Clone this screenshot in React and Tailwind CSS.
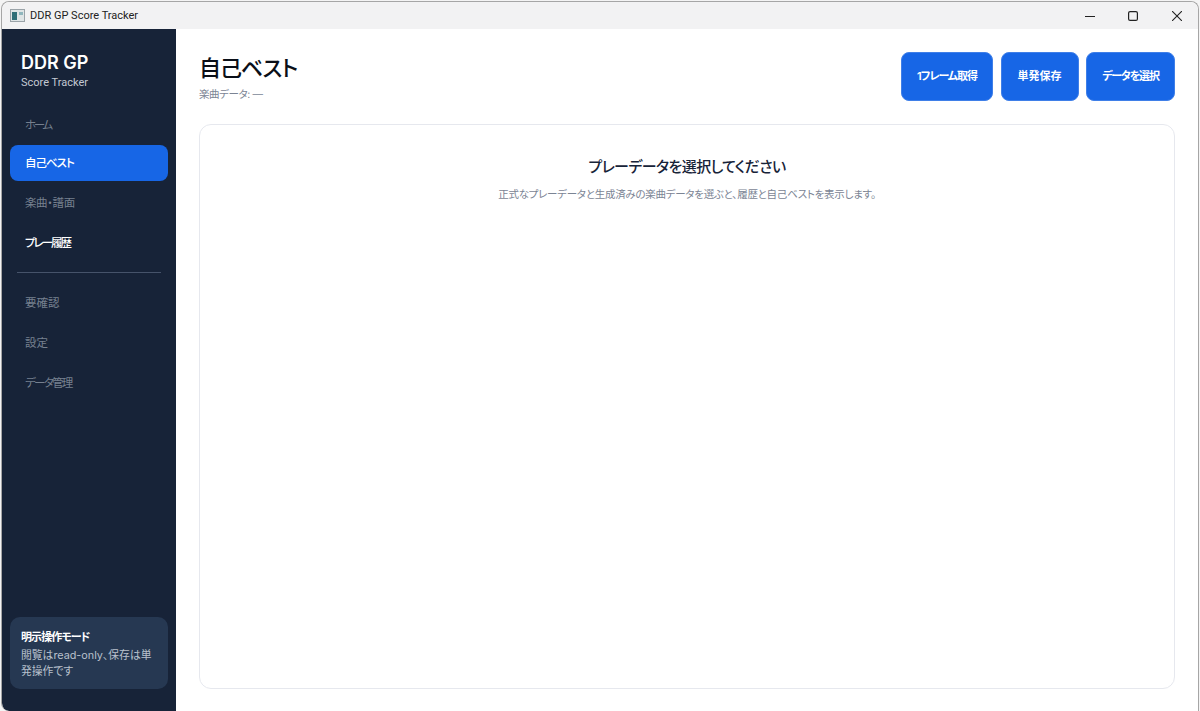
const font = "font-['Inter','Noto_Sans_CJK_JP',sans-serif] [font-feature-settings:'palt']";

const navTop = [
  { label: "ホーム", cls: "text-[#76808f] tracking-[-2.4px] pt-[5px]" },
  { label: "自己ベスト", cls: "bg-[#1766e6] text-white font-medium tracking-[-1.1px] pt-[1px]" },
  { label: "楽曲・譜面", cls: "text-[#76808f] tracking-[-0.4px] pt-[1px]" },
  { label: "プレー履歴", cls: "text-white font-medium tracking-[-2px] pt-[1px]" },
];
const navBottom = [
  { label: "要確認", cls: "" },
  { label: "設定", cls: "" },
  { label: "データ管理", cls: "tracking-[-1.7px]" },
];

const TitleBar = () => (
  <div className="h-[27px] shrink-0 flex items-center bg-[#f2f2f3] rounded-t-[7px]">
    <svg width="15" height="13" viewBox="0 0 15 13" className="ml-[8px] mr-[5px]">
      <rect x="0.5" y="0.5" width="14" height="12" fill="#dfe5e6" stroke="#9aa3a8" />
      <rect x="2" y="3" width="5" height="8" fill="#2f6f78" />
      <rect x="9" y="3" width="4" height="3" fill="#8fb6bd" />
    </svg>
    <span className="pt-[1px] text-[11px] text-[#222] font-['Roboto',sans-serif]">DDR GP Score Tracker</span>
    <div className="ml-auto mr-[16px] flex items-center">
      <svg width="10" height="10" viewBox="0 0 10 10">
        <path d="M0 5.5h10" stroke="#222" strokeWidth="1.2" />
      </svg>
      <svg width="10" height="10" viewBox="0 0 10 10" className="ml-[33px]">
        <rect x="0.6" y="0.6" width="8.8" height="8.8" rx="1.5" fill="none" stroke="#222" strokeWidth="1.2" />
      </svg>
      <svg width="10" height="10" viewBox="0 0 10 10" className="ml-[34px]">
        <path d="M0 0l10 10M10 0l-10 10" stroke="#222" strokeWidth="1.1" />
      </svg>
    </div>
  </div>
);

const Sidebar = () => (
  <aside className="w-[174px] shrink-0 bg-[#172338] flex flex-col px-[8px] pb-[22px] rounded-bl-[7px]">
    <div className="pl-[11px] pt-[22px]">
      <div className="text-[18px] leading-[24px] font-semibold text-white">DDR GP</div>
      <div className="text-[11px] leading-[16px] text-[#c3c9d3] font-['Roboto',sans-serif]">Score Tracker</div>
    </div>
    <nav className="mt-[14px] flex flex-col gap-[4px]">
      {navTop.map((item) => (
        <div key={item.label} className={`h-[36px] flex items-center pl-[15px] rounded-[8px] text-[11.5px] ${item.cls}`}>
          {item.label}
        </div>
      ))}
    </nav>
    <div className="mx-[7px] mt-[11px] mb-[12px] h-px bg-[#46536a]" />
    <nav className="flex flex-col gap-[4px]">
      {navBottom.map((item) => (
        <div key={item.label} className={`h-[36px] flex items-center pl-[15px] pt-[1px] rounded-[8px] text-[11.5px] text-[#76808f] ${item.cls}`}>
          {item.label}
        </div>
      ))}
    </nav>
    <div className="mt-auto h-[72px] rounded-[10px] bg-[#263852] pl-[11px] pr-[12px] pt-[12px]">
      <div className="text-[11px] leading-[16px] font-semibold text-white tracking-[-0.9px]">明示操作モード</div>
      <div className="mt-[3px] text-[10.8px] leading-[16px] text-[#b9c1cd]">閲覧はread-only、保存は単発操作です</div>
    </div>
  </aside>
);

const ActionButton = ({ width, children }) => (
  <button type="button" className={`${width} h-[49px] rounded-[8px] bg-[#1766e6] border border-[#3f7fe8] text-white text-[11px] font-semibold`}>
    {children}
  </button>
);

export default function App() {
  return (
    <div className={`w-[1200px] h-[711px] overflow-hidden bg-[#f4f4f4] flex ${font}`}>
      <div className="flex-1 mx-[1px] mt-[1px] flex flex-col bg-white border-x border-t border-[#a6a6a6] rounded-t-[8px] rounded-bl-[8px] overflow-hidden">
        <TitleBar />
        <div className="flex-1 flex min-h-0">
          <Sidebar />
          <main className="flex-1 flex flex-col pl-[23px] pr-[23px] pt-[23px] pb-[22px] min-w-0">
            <header className="h-[49px] flex justify-between items-start">
              <div>
                <h1 className="text-[22px] leading-[32px] font-medium text-[#0a0f18] tracking-[-1.1px]">自己ベスト</h1>
                <p className="mt-[4px] text-[10.5px] leading-[14px] text-[#7b8494] tracking-[-0.4px]">楽曲データ: —</p>
              </div>
              <div className="flex gap-[7.5px]">
                <ActionButton width="w-[92px] tracking-[-1px]">1フレーム取得</ActionButton>
                <ActionButton width="w-[78px]">単発保存</ActionButton>
                <ActionButton width="w-[89px] tracking-[-1.2px]">データを選択</ActionButton>
              </div>
            </header>
            <section className="mt-[23px] flex-1 rounded-[12px] border border-[#e6e8ee] bg-white pt-[31px] text-center">
              <h2 className="text-[15px] leading-[22px] font-medium text-[#172338] tracking-[-0.6px]">プレーデータを選択してください</h2>
              <p className="mt-[10px] text-[10.5px] leading-[14px] text-[#7b8494] tracking-[-0.27px]">
                正式なプレーデータと生成済みの楽曲データを選ぶと、履歴と自己ベストを表示します。
              </p>
            </section>
          </main>
        </div>
      </div>
    </div>
  );
}
